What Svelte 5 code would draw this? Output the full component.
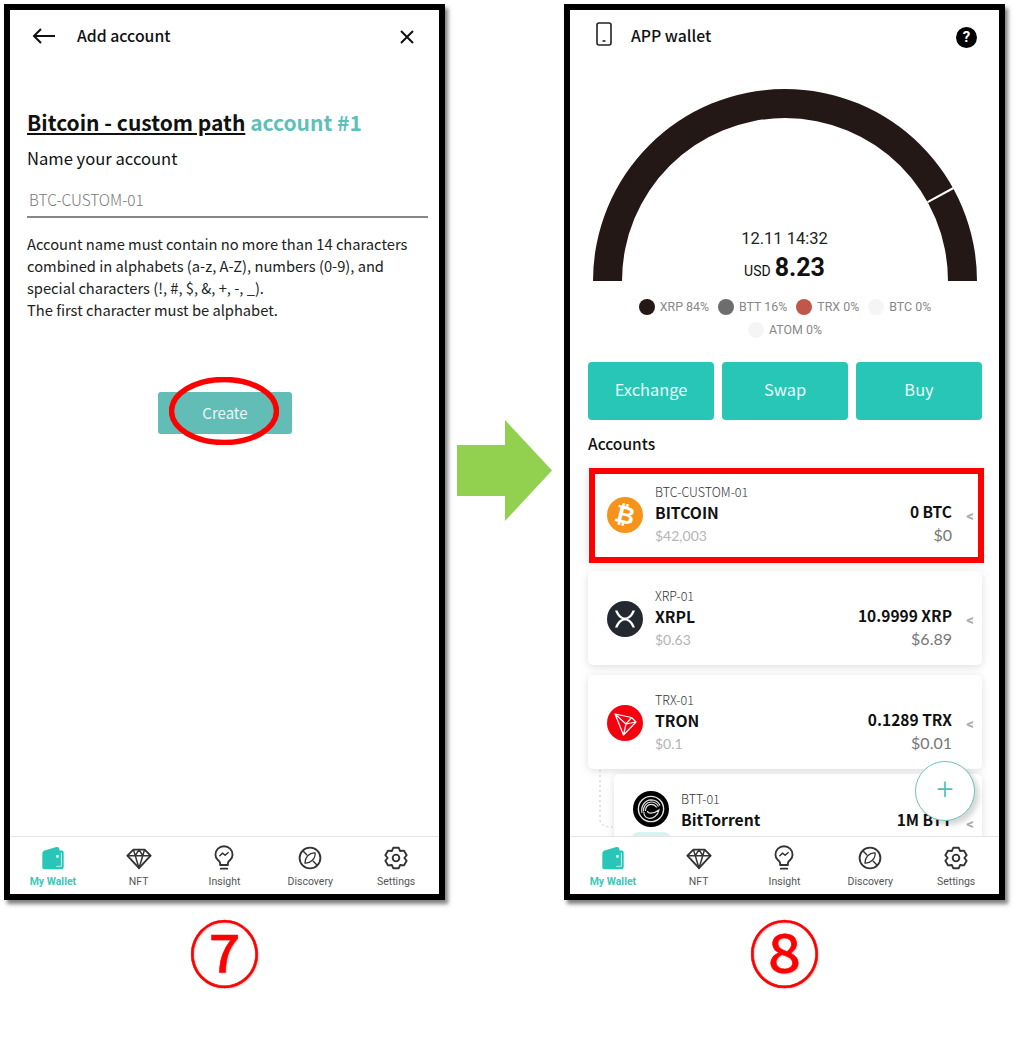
<script>
  const tabs = ['My Wallet', 'NFT', 'Insight', 'Discovery', 'Settings'];
  const legend = [
    { label: 'XRP 84%', color: '#231815' },
    { label: 'BTT 16%', color: '#6d6d6d' },
    { label: 'TRX 0%', color: '#c0574b' },
    { label: 'BTC 0%', color: '#f5f5f5' },
    { label: 'ATOM 0%', color: '#f5f5f5' },
  ];
  const accounts = [
    { id: 'BTC-CUSTOM-01', name: 'BITCOIN', price: '$42,003', amount: '0 BTC', usd: '$0', coin: 'btc' },
    { id: 'XRP-01', name: 'XRPL', price: '$0.63', amount: '10.9999 XRP', usd: '$6.89', coin: 'xrp' },
    { id: 'TRX-01', name: 'TRON', price: '$0.1', amount: '0.1289 TRX', usd: '$0.01', coin: 'trx' },
    { id: 'BTT-01', name: 'BitTorrent', price: '', amount: '1M BTT', usd: '', coin: 'btt' },
  ];
</script>

{#snippet tabIcon(name)}
  <svg class="tab-icon" viewBox="0 0 28 28" fill="none" stroke="#333" stroke-width="2" stroke-linejoin="round" stroke-linecap="round">
    {#if name === 'My Wallet'}
      <path d="M2.5 9 Q2.5 6.5 5 5.8 L17.5 2.2 Q20.5 1.6 21 4.5 L21 6 L23.5 6 Q25.5 6 25.5 8 L25.5 24 Q25.5 26 23.5 26 L4.5 26 Q2.5 26 2.5 24Z" fill="#27c6b7" stroke="none" />
      <rect x="17.5" y="11" width="2.6" height="2.6" fill="#fff" stroke="none" />
      <path d="M23 8.5 V23 H18" stroke="#fff" stroke-width="0.8" />
    {:else if name === 'NFT'}
      <path d="M8 5 H20 L26.5 11.5 L14 25 L1.5 11.5Z" />
      <path d="M1.5 11.5 H26.5 M8 5 L10 11.5 L14 25 L18 11.5 L20 5 M10 11.5 L14 5 L18 11.5" stroke-width="1.6" />
    {:else if name === 'Insight'}
      <path d="M9.8 21.5 V19.5 C9.8 18 8.6 17.3 7.4 16.2 C5.8 14.7 4.8 12.7 4.8 10.5 A9.2 9.2 0 0 1 23.2 10.5 C23.2 12.7 22.2 14.7 20.6 16.2 C19.4 17.3 18.2 18 18.2 19.5 V21.5Z" />
      <path d="M10.5 25.5 H17.5" />
      <path d="M9.5 11.5 L12.5 8.8 L15.2 11 L18.5 8" stroke-width="1.6" />
    {:else if name === 'Discovery'}
      <circle cx="14" cy="14" r="11.2" />
      <path d="M6.5 6.5 L10.5 10.5 M17.5 17.5 L21.5 21.5" stroke-width="1.5" />
      <path d="M19.5 8.5 C19.8 11.5 18.5 14.5 16.5 16.5 C14.5 18.5 11.5 19.8 8.5 19.5 C8.8 16.5 9.8 13.5 11.5 11.5 C13.5 9.6 16.5 8.2 19.5 8.5Z" stroke-width="1.4" />
    {:else}
      <path d="M11 3 H17 L18.5 6.5 L22.5 6 L25.5 11 L23 14 L25.5 17 L22.5 22 L18.5 21.5 L17 25 H11 L9.5 21.5 L5.5 22 L2.5 17 L5 14 L2.5 11 L5.5 6 L9.5 6.5Z" />
      <circle cx="14" cy="14" r="3.6" />
    {/if}
  </svg>
{/snippet}

{#snippet tabBar()}
  <nav class="tabs">
    {#each tabs as t, i}
      <div class="tab" class:active={i === 0}>
        {@render tabIcon(t)}
        <span>{t}</span>
      </div>
    {/each}
  </nav>
{/snippet}

{#snippet coin(kind)}
  {#if kind === 'btc'}
    <div class="coin btc"><span>₿</span></div>
  {:else if kind === 'xrp'}
    <svg class="coin" viewBox="0 0 36 36">
      <circle cx="18" cy="18" r="18" fill="#23292f" />
      <path d="M8 9.5 H10.5 C13 15 15.5 16.5 18 16.5 C20.5 16.5 23 15 25.5 9.5 H28 C25.5 16 22 18.4 18 18.4 C14 18.4 10.5 16 8 9.5Z" fill="#fff" />
      <path d="M8 26.5 H10.5 C13 21 15.5 19.5 18 19.5 C20.5 19.5 23 21 25.5 26.5 H28 C25.5 20 22 17.6 18 17.6 C14 17.6 10.5 20 8 26.5Z" fill="#fff" />
    </svg>
  {:else if kind === 'trx'}
    <svg class="coin" viewBox="0 0 36 36">
      <circle cx="18" cy="18" r="18" fill="#f5000f" />
      <path d="M8 9 L24.5 12.5 L29 17 L16.5 30Z M8 9 L19 19 L16.5 30 M19 19 L24.5 12.5 M19 19 L29 17" fill="none" stroke="#fff" stroke-width="1.2" stroke-linejoin="round" />
    </svg>
  {:else}
    <svg class="coin" viewBox="0 0 36 36" fill="none">
      <circle cx="18" cy="18" r="18" fill="#000" />
      <circle cx="18" cy="18" r="12.6" stroke="#e4e4e4" stroke-width="1.4" />
      <path d="M9 22 C7.5 15 12 9 18 8.8 C22.5 8.8 25.5 11 27 14.5" stroke="#e4e4e4" stroke-width="1.2" />
      <path d="M10.5 20.5 C10 15.5 13.5 11 18 11 C21.5 11 24 12.5 25.5 15.5" stroke="#e4e4e4" stroke-width="1.2" />
      <path d="M12.5 20 C12.2 16.5 14.5 13.3 18 13.3 C20.5 13.3 22.5 14.5 23.8 16.5" stroke="#e4e4e4" stroke-width="1.2" />
      <path d="M14.5 20 C14.5 22.5 20 23.5 26 19 C25 24 20.5 28 15.5 27.2 C12 26.5 10.5 23.5 11 21" stroke="#e4e4e4" stroke-width="1.2" />
    </svg>
  {/if}
{/snippet}

<div class="slide">
  <div class="col">
    <section class="phone">
      <header class="bar">
        <svg class="back" viewBox="0 0 24 16" fill="none" stroke="#111" stroke-width="2"><path d="M23 8 H2 M9 1 L2 8 L9 15" /></svg>
        <span class="bar-title">Add account</span>
        <svg class="close" viewBox="0 0 14 14" fill="none" stroke="#111" stroke-width="2"><path d="M1 1 L13 13 M13 1 L1 13" /></svg>
      </header>
      <main class="form">
        <h1><u>Bitcoin - custom path</u> <em>account #1</em></h1>
        <p class="name">Name your account</p>
        <div class="input">BTC-CUSTOM-01</div>
        <p class="rules">
          Account name must contain no more than 14 characters<br />
          combined in alphabets (a-z, A-Z), numbers (0-9), and<br />
          special characters (!, #, $, &amp;, +, -, _).<br />
          The first character must be alphabet.
        </p>
        <button class="create">Create</button>
      </main>
      {@render tabBar()}
      <svg class="ring" viewBox="0 0 110 68" fill="none"><ellipse cx="55" cy="34" rx="52.5" ry="31.5" stroke="#f00" stroke-width="5.5" /></svg>
    </section>
    <div class="step">⑦</div>
  </div>

  <svg class="arrow" viewBox="0 0 95 101"><path d="M0 25 H48 V0 L95 50.5 L48 101 V76 H0Z" fill="#92d050" /></svg>

  <div class="col">
    <section class="phone">
      <header class="bar wallet-bar">
        <svg class="device" viewBox="0 0 16 24" fill="none" stroke="#222" stroke-width="1.6"><rect x="1" y="1" width="14" height="22" rx="2" /><path d="M6.5 19 H9.5" /></svg>
        <span class="bar-title">APP wallet</span>
        <span class="help">?</span>
      </header>
      <main class="wallet">
        <div class="gauge">
          <svg viewBox="0 0 384 192" width="384" height="192">
            <path d="M0 192 A192 192 0 0 1 384 192 H355 A163 163 0 0 0 29 192Z" fill="#231815" />
            <path d="M334.6 113.2 L360.5 99" stroke="#fff" stroke-width="2" />
          </svg>
          <div class="total">
            <div class="when">12.11 14:32</div>
            <div class="sum"><small>USD</small> <b>8.23</b></div>
          </div>
        </div>
        <div class="legend">
          {#each legend as l}
            <span class="item"><i style="background:{l.color}"></i>{l.label}</span>
          {/each}
        </div>
        <div class="actions">
          <button>Exchange</button>
          <button>Swap</button>
          <button>Buy</button>
        </div>
        <h2>Accounts</h2>
        <div class="cards">
          {#each accounts as a}
            <article class="card" class:child={a.coin === 'btt'}>
              {@render coin(a.coin)}
              <div class="info">
                <div class="id">{a.id}</div>
                <div class="coin-name">{a.name}</div>
                <div class="price">{a.price}</div>
              </div>
              <div class="vals">
                <div class="amount">{a.amount}</div>
                <div class="usd">{a.usd}</div>
              </div>
              <span class="chev">&lt;</span>
            </article>
          {/each}
        </div>
        <svg class="tree" viewBox="0 0 16 60" fill="none"><path d="M1 0 V50 Q1 57 14 57" stroke="#c4c4c4" stroke-dasharray="2 3" /></svg>
        <div class="pill"></div>
      </main>
      {@render tabBar()}
      <div class="fab">+</div>
    </section>
    <div class="step">⑧</div>
    <div class="mark"></div>
  </div>
</div>

<style>
  :global(body) {
    background: #fff;
  }
  .slide {
    width: 1018px;
    height: 1042px;
    box-sizing: border-box;
    padding: 4px 0 0 4px;
    display: flex;
    overflow: hidden;
    font-family: "Noto Sans CJK KR", "Noto Sans", sans-serif;
    color: #111;
  }
  .col {
    position: relative;
    width: 441px;
    flex: none;
  }
  .phone {
    position: relative;
    box-sizing: border-box;
    height: 896px;
    border: 6px solid #000;
    box-shadow: 3px 4px 4px rgba(0, 0, 0, 0.5);
    display: flex;
    flex-direction: column;
    background: #fff;
    overflow: hidden;
  }
  .step {
    margin-top: 8px;
    text-align: center;
    font-size: 71.5px;
    font-weight: 400;
    line-height: 84px;
    color: #f00;
    -webkit-text-stroke: 0.6px #f00;
    text-shadow: 1px 1px 2px rgba(0, 0, 0, 0.2);
  }
  .arrow {
    width: 95px;
    height: 101px;
    flex: none;
    margin: 416px 12px 0;
  }
  .bar {
    flex: none;
    height: 51px;
    padding-bottom: 1px;
    display: flex;
    align-items: center;
    padding-left: 22px;
    padding-right: 25px;
  }
  .bar-title {
    flex: 1;
    font-weight: 500;
    font-size: 15.8px;
    margin-bottom: 1px;
  }
  .back {
    width: 24px;
    height: 16px;
    margin-right: 21px;
  }
  .close {
    width: 14px;
    height: 14px;
    margin-top: 2px;
  }
  .form {
    flex: 1;
    min-height: 0;
    padding: 0 11px 0 17px;
  }
  h1 {
    margin: 43px 0 0;
    font-size: 21px;
    line-height: 34px;
    font-weight: 700;
  }
  h1 em {
    font-style: normal;
    color: #5fc0b8;
  }
  .name {
    margin: 6px 0 0;
    font-size: 16.6px;
    line-height: 26px;
  }
  .input {
    margin-top: 13px;
    height: 32px;
    line-height: 30px;
    padding-left: 2px;
    font-size: 15.4px;
    font-weight: 300;
    color: #777;
    border-bottom: 2px solid #888;
  }
  .rules {
    margin: 15px 0 0;
    font-size: 14.7px;
    line-height: 22px;
    color: #222;
  }
  .create {
    display: block;
    width: 134px;
    height: 42px;
    margin: 71px 0 0 131px;
    padding-bottom: 3px;
    border: 0;
    border-radius: 3px;
    background: #62bdb6;
    color: #e8f8f6;
    font: 400 15px "Noto Sans CJK KR", sans-serif;
  }
  .ring {
    position: absolute;
    left: 159px;
    top: 367px;
    width: 110px;
    height: 68px;
  }
  .tabs {
    flex: none;
    height: 58px;
    box-sizing: border-box;
    display: grid;
    grid-template-columns: repeat(5, 1fr);
    border-top: 1px solid #e4e4e4;
    background: #fff;
    position: relative;
  }
  .tab {
    display: flex;
    flex-direction: column;
    align-items: center;
    padding-top: 8px;
    font: 10.5px Roboto, sans-serif;
    color: #555;
  }
  .tab span {
    margin-top: 4px;
    line-height: 14px;
  }
  .tab.active {
    color: #3cc7b8;
    font-weight: 700;
  }
  .tab-icon {
    width: 26px;
    height: 26px;
  }
  .wallet-bar {
    padding: 0 22px 1px 26px;
  }
  .device {
    width: 16px;
    height: 24px;
    margin: 0 19px 3px 0;
  }
  .help {
    width: 21px;
    height: 21px;
    margin-top: 3px;
    border-radius: 50%;
    background: #000;
    color: #fff;
    font: 700 15px/21px Roboto, sans-serif;
    text-align: center;
  }
  .wallet {
    position: relative;
    flex: 1;
    min-height: 0;
    overflow: hidden;
    padding: 0 17px 0 18px;
  }
  .gauge {
    position: relative;
    width: 384px;
    height: 192px;
    margin: 27px 0 0 4.5px;
  }
  .gauge svg {
    display: block;
  }
  .total {
    position: absolute;
    left: 0;
    right: 0;
    bottom: -8px;
    text-align: center;
    font-family: Roboto, sans-serif;
  }
  .when {
    font-size: 16.5px;
    line-height: 22px;
    color: #222;
  }
  .sum {
    line-height: 36px;
  }
  .sum small {
    font-size: 14px;
  }
  .sum b {
    font-size: 25px;
    font-weight: 700;
  }
  .legend {
    display: flex;
    flex-wrap: wrap;
    justify-content: center;
    column-gap: 9px;
    margin: 14px 40px 0;
    font: 12.4px/23px Roboto, sans-serif;
    color: #888;
  }
  .item {
    display: flex;
    align-items: center;
    gap: 5px;
  }
  .item i {
    width: 16px;
    height: 16px;
    border-radius: 50%;
  }
  .actions {
    display: grid;
    grid-template-columns: repeat(3, 126px);
    gap: 8px;
    margin-top: 21px;
  }
  .actions button {
    height: 58px;
    border: 0;
    border-radius: 4px;
    background: #27c6b7;
    color: #eafaf8;
    font: 400 16.4px "Noto Sans CJK KR", sans-serif;
    padding-bottom: 5px;
  }
  h2 {
    margin: 12px 0 13px;
    font-size: 15.5px;
    line-height: 22px;
    font-weight: 500;
  }
  .cards {
    display: flex;
    flex-direction: column;
    gap: 10px;
  }
  .card {
    flex: none;
    box-sizing: border-box;
    height: 94px;
    width: 394px;
    display: flex;
    align-items: center;
    padding: 2px 8px 0 19px;
    border-radius: 5px;
    background: #fff;
    box-shadow: 0 2px 8px rgba(0, 0, 0, 0.13);
  }
  .card.child {
    margin: -5px 0 0 26px;
    width: 368px;
    padding-left: 19px;
    align-items: flex-start;
    padding-top: 17px;
  }
  .coin {
    width: 36px;
    height: 36px;
    flex: none;
  }
  .btc {
    border-radius: 50%;
    background: #f7931a;
    color: #fff;
    text-align: center;
    font: 700 24px/36px "DejaVu Sans", sans-serif;
  }
  .btc span {
    display: block;
    transform: rotate(14deg);
  }
  .info {
    flex: 1;
    margin-left: 12px;
  }
  .id {
    font-size: 12.5px;
    line-height: 16px;
    color: #333;
    font-weight: 300;
  }
  .coin-name {
    font-size: 15.7px;
    line-height: 25px;
    font-weight: 700;
  }
  .price {
    font: 14px/21px Lato, sans-serif;
    color: #b4b4b4;
  }
  .vals {
    text-align: right;
    margin-top: 15px;
  }
  .amount {
    font-size: 15.5px;
    line-height: 23px;
    font-weight: 700;
  }
  .usd {
    font: 16px/23px Lato, sans-serif;
    color: #777;
  }
  .chev {
    width: 22px;
    flex: none;
    text-align: right;
    font: 700 15px Roboto, sans-serif;
    color: #aaa;
    margin-top: 2px;
  }
  .child .chev {
    margin-top: 24px;
  }
  .child .vals {
    margin-top: 17px;
  }
  .tree {
    position: absolute;
    left: 29px;
    top: 708px;
    width: 16px;
    height: 60px;
  }
  .pill {
    position: absolute;
    left: 61px;
    top: 770px;
    width: 40px;
    height: 10px;
    border-radius: 8px 8px 0 0;
    background: #d6f3f0;
  }
  .fab {
    position: absolute;
    left: 345px;
    top: 751px;
    width: 60px;
    height: 60px;
    box-sizing: border-box;
    border: 1.5px solid #6fc4bd;
    border-radius: 50%;
    background: #fff;
    box-shadow: 4px 4px 5px rgba(0, 0, 0, 0.16);
    color: #55bfb7;
    font: 300 30px/54px Roboto, sans-serif;
    text-align: center;
  }
  .mark {
    position: absolute;
    left: 25px;
    top: 464px;
    width: 395px;
    height: 95px;
    box-sizing: border-box;
    border: 6px solid #f00;
  }
</style>
